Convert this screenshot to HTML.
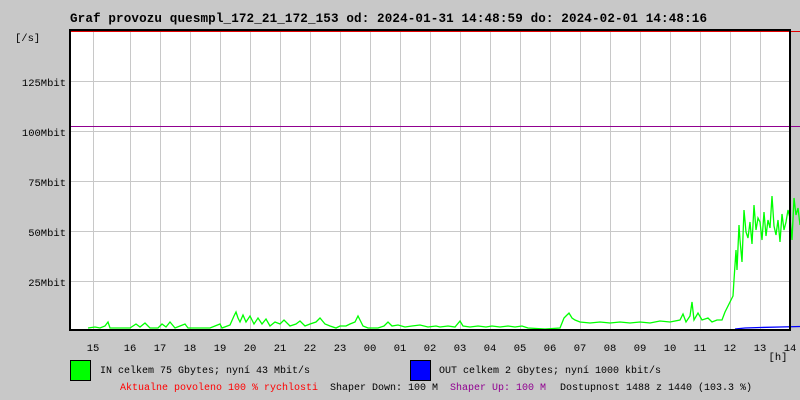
<!DOCTYPE html>
<html><head><meta charset="utf-8"><style>
body{margin:0;background:#c8c8c8;width:800px;height:400px;overflow:hidden;position:relative;font-family:"Liberation Mono",monospace}
</style></head><body>
<svg width="800" height="400" style="position:absolute;left:0;top:0" font-family="Liberation Mono, monospace">
<rect x="70" y="30" width="720" height="300" fill="#fff"/>
<g stroke="#c8c8c8" stroke-width="1">
<line x1="93.5" y1="31" x2="93.5" y2="330"/>
<line x1="130.5" y1="31" x2="130.5" y2="330"/><line x1="160.5" y1="31" x2="160.5" y2="330"/><line x1="190.5" y1="31" x2="190.5" y2="330"/><line x1="220.5" y1="31" x2="220.5" y2="330"/><line x1="250.5" y1="31" x2="250.5" y2="330"/><line x1="280.5" y1="31" x2="280.5" y2="330"/><line x1="310.5" y1="31" x2="310.5" y2="330"/><line x1="340.5" y1="31" x2="340.5" y2="330"/><line x1="370.5" y1="31" x2="370.5" y2="330"/><line x1="400.5" y1="31" x2="400.5" y2="330"/><line x1="430.5" y1="31" x2="430.5" y2="330"/><line x1="460.5" y1="31" x2="460.5" y2="330"/><line x1="490.5" y1="31" x2="490.5" y2="330"/><line x1="520.5" y1="31" x2="520.5" y2="330"/><line x1="550.5" y1="31" x2="550.5" y2="330"/><line x1="580.5" y1="31" x2="580.5" y2="330"/><line x1="610.5" y1="31" x2="610.5" y2="330"/><line x1="640.5" y1="31" x2="640.5" y2="330"/><line x1="670.5" y1="31" x2="670.5" y2="330"/><line x1="700.5" y1="31" x2="700.5" y2="330"/><line x1="730.5" y1="31" x2="730.5" y2="330"/><line x1="760.5" y1="31" x2="760.5" y2="330"/>
<line x1="70" y1="81.5" x2="800" y2="81.5"/><line x1="70" y1="131.5" x2="800" y2="131.5"/><line x1="70" y1="181.5" x2="800" y2="181.5"/><line x1="70" y1="231.5" x2="800" y2="231.5"/><line x1="70" y1="281.5" x2="800" y2="281.5"/>
</g>
<line x1="70" y1="31.5" x2="800" y2="31.5" stroke="#e00000"/>
<line x1="70" y1="126.5" x2="800" y2="126.5" stroke="#900090"/>
<polyline fill="none" stroke="#00ff00" stroke-width="1.3" points="88,328 95,327 100,328 105,326 108,322 110,328 120,328 130,328 136,324 140,327 145,323 150,328 158,328 162,324 166,327 170,322 175,328 180,326 185,324 188,328 200,328 210,328 215,326 220,324 222,328 230,325 234,316 236,312 238,318 240,322 243,315 246,322 250,316 254,324 258,318 262,324 266,319 270,326 275,322 280,324 284,320 290,326 296,324 300,321 305,326 310,324 316,322 320,318 325,324 330,326 336,328 340,326 346,326 350,324 355,322 358,316 360,320 363,326 368,328 378,328 384,326 388,322 392,326 398,325 405,327 412,326 420,325 428,327 436,326 440,327 448,326 455,327 460,321 463,326 470,327 478,326 486,327 492,326 500,327 508,326 515,327 522,326 528,328 545,329 560,328 564,318 566,316 569,313 572,318 575,320 580,322 590,323 600,322 610,323 620,322 630,323 640,322 650,323 660,321 670,322 680,320 683,314 686,322 690,316 692,302 694,320 698,313 702,320 708,318 712,322 717,320 722,320 725,312 728,306 730,302 733,296 734,280 736,250 737,270 739,225 740,240 742,262 744,210 746,232 748,238 750,222 752,244 754,205 756,230 758,218 760,222 762,240 764,212 766,236 768,220 770,228 772,196 774,226 776,235 778,220 780,242 782,214 784,230 786,222 788,210 790,218 792,240 794,198 796,215 798,208 800,225"/>
<polyline fill="none" stroke="#0000ff" stroke-width="1.3" points="735,329 745,328 760,327.5 780,327 800,326.5"/>
<rect x="70" y="30" width="720" height="300" fill="none" stroke="#000" stroke-width="2"/>
<g font-size="10.5" fill="#000" text-anchor="end">
<text x="66" y="86">125Mbit</text><text x="66" y="136">100Mbit</text><text x="66" y="186">75Mbit</text><text x="66" y="236">50Mbit</text><text x="66" y="286">25Mbit</text>
</g>
<text x="15" y="41" font-size="10.5">[/s]</text>
<g font-size="10.5" fill="#000" text-anchor="middle">
<text x="93" y="351">15</text><text x="130" y="351">16</text><text x="160" y="351">17</text><text x="190" y="351">18</text><text x="220" y="351">19</text><text x="250" y="351">20</text><text x="280" y="351">21</text><text x="310" y="351">22</text><text x="340" y="351">23</text><text x="370" y="351">00</text><text x="400" y="351">01</text><text x="430" y="351">02</text><text x="460" y="351">03</text><text x="490" y="351">04</text><text x="520" y="351">05</text><text x="550" y="351">06</text><text x="580" y="351">07</text><text x="610" y="351">08</text><text x="640" y="351">09</text><text x="670" y="351">10</text><text x="700" y="351">11</text><text x="730" y="351">12</text><text x="760" y="351">13</text><text x="790" y="351">14</text>
<text x="778" y="360">[h]</text>
</g>
<text x="70" y="22" font-size="12.6" font-weight="bold" textLength="637">Graf provozu quesmpl_172_21_172_153 od: 2024-01-31 14:48:59 do: 2024-02-01 14:48:16</text>
<rect x="70.5" y="360.5" width="20" height="20" fill="#00ff00" stroke="#000"/>
<rect x="410.5" y="360.5" width="20" height="20" fill="#0000ff" stroke="#000"/>
<g font-size="10">
<text x="100" y="373" textLength="210">IN celkem 75 Gbytes; nyní 43 Mbit/s</text>
<text x="439" y="373" textLength="222">OUT celkem 2 Gbytes; nyní 1000 kbit/s</text>
<text x="120" y="390" fill="#ff0000" textLength="198">Aktualne povoleno 100 % rychlosti</text>
<text x="330" y="390" textLength="108">Shaper Down: 100 M</text>
<text x="450" y="390" fill="#900090" textLength="96">Shaper Up: 100 M</text>
<text x="560" y="390" textLength="192">Dostupnost 1488 z 1440 (103.3 %)</text>
</g>
</svg>
</body></html>
